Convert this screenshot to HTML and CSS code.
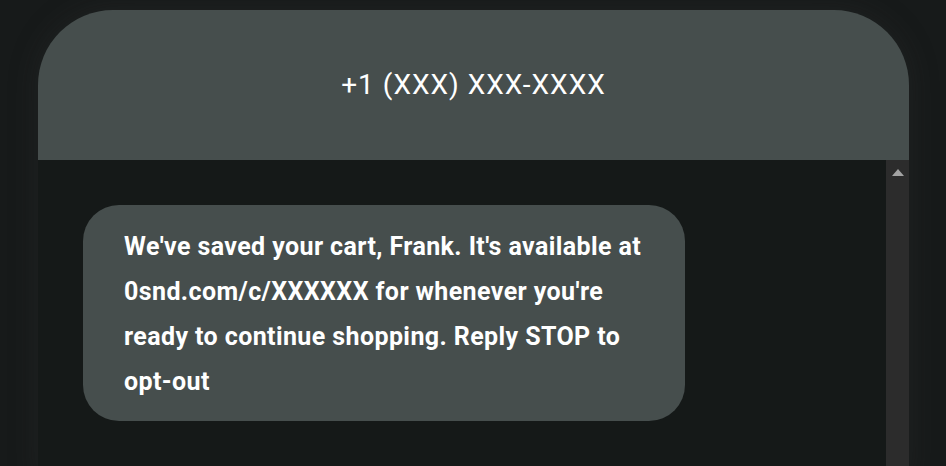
FILE: index.html
```html
<!DOCTYPE html>
<html lang="en">
<head>
    <meta charset="UTF-8">
    <meta name="viewport" content="width=device-width, initial-scale=1.0">
    <title>SMS Preview</title>
    <link rel="stylesheet" href="styles.css">
</head>
<body>
    <div class="phone">
        <div class="phone-header">
            <span class="phone-number">+1 (XXX) XXX-XXXX</span>
        </div>
        <div class="phone-body">
            <div class="thread">
                <div class="bubble">We've saved your cart, Frank. It's available at 0snd.com/c/XXXXXX for whenever you're ready to continue shopping. Reply STOP to opt-out</div>
            </div>
            <div class="scrollbar">
                <span class="scroll-arrow"></span>
            </div>
        </div>
    </div>
</body>
</html>
```

FILE: styles.css
```css
body {
    margin: 0;
    padding-top: 10px;
    background: #171a1a;
    font-family: Roboto, "Liberation Sans", sans-serif;
    overflow: hidden;
}
.phone {
    width: 871px;
    margin-left: 38px;
    box-shadow: 0 0 30px rgba(60,60,60,0.25);
    border-radius: 75px 75px 0 0;
}
.phone-header {
    height: 150px;
    background: #464e4d;
    border-radius: 75px 75px 0 0;
    display: flex;
    align-items: center;
    justify-content: center;
}
.phone-number {
    color: #fff;
    font-size: 28px;
    letter-spacing: 1px;
    margin-top: -2px;
}
.phone-body {
    display: flex;
    background: #151918;
    height: 320px;
}
.thread {
    flex: 1;
    padding: 45px 0 0 45px;
}
.bubble {
    width: 524px;
    padding: 19px 37px 17px 41px;
    background: #464e4d;
    border-radius: 36px;
    color: #fff;
    font-weight: 700;
    font-size: 25px;
    letter-spacing: 0.4px;
    line-height: 45px;
}
.scrollbar {
    width: 23px;
    background: #2c2c2c;
    display: flex;
    justify-content: center;
    padding-top: 9px;
}
.scroll-arrow {
    width: 0;
    height: 0;
    border-left: 6px solid transparent;
    border-right: 6px solid transparent;
    border-bottom: 7px solid #a3a3a3;
}
```
